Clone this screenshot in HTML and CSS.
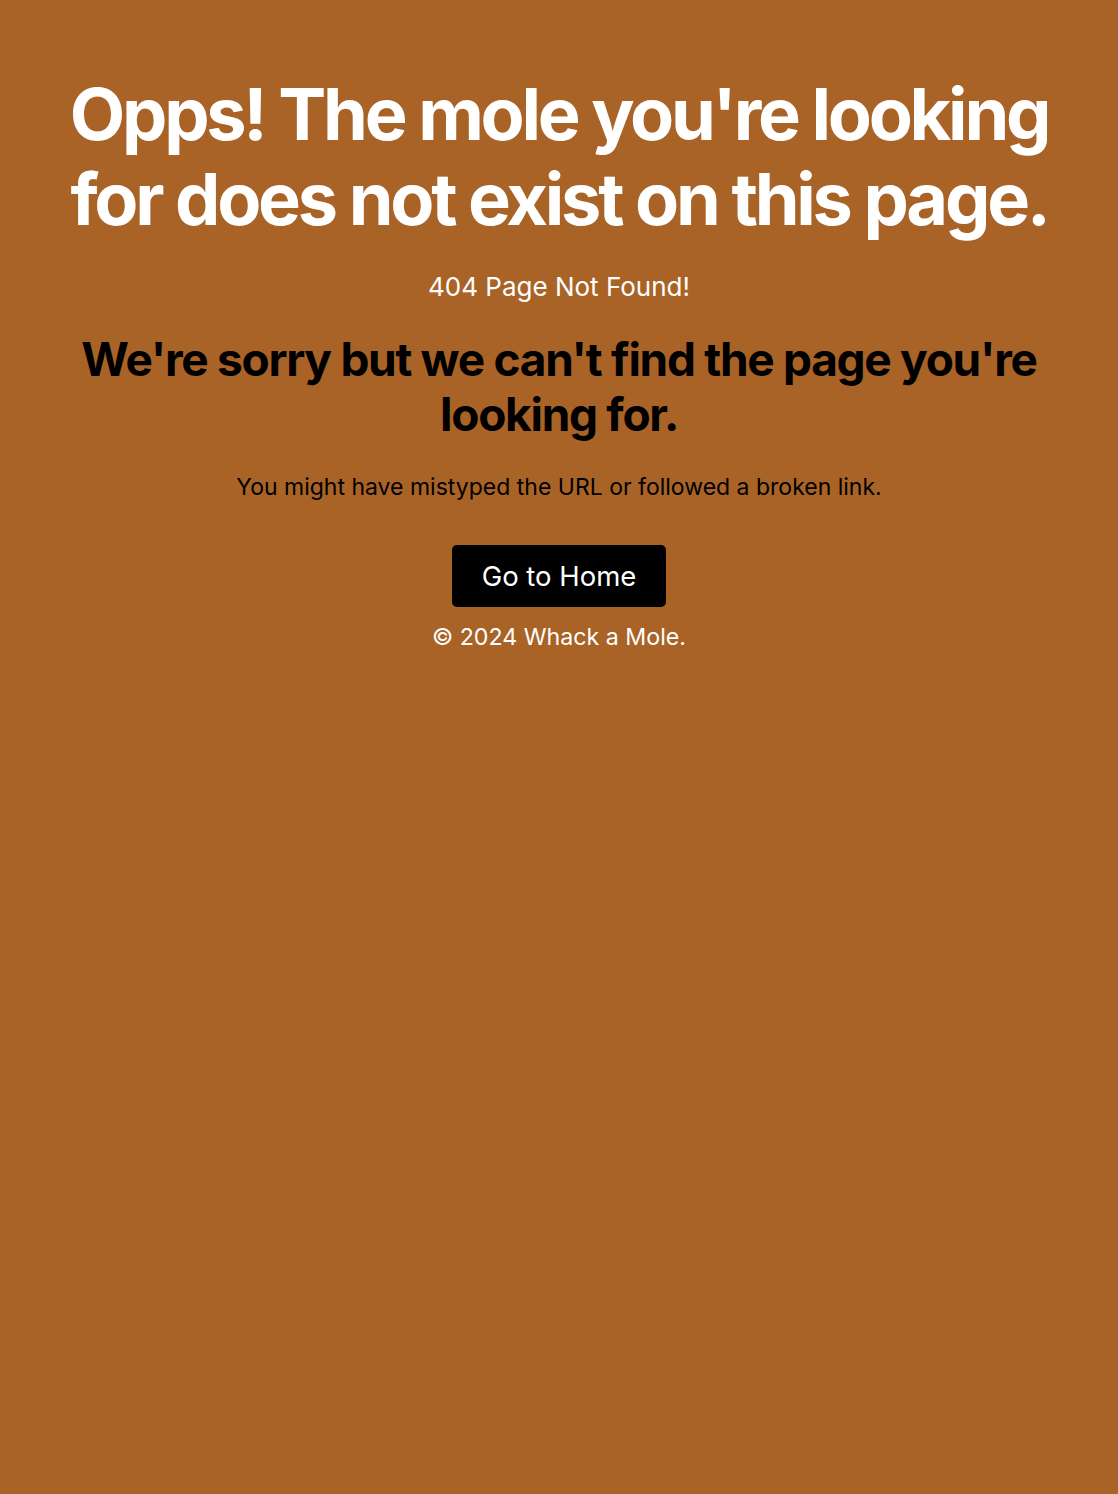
FILE: index.html
```html
<!DOCTYPE html>
<html lang="en">
<head>
<meta charset="utf-8">
<title>404 - Whack a Mole</title>
<link rel="stylesheet" href="styles.css">
</head>
<body>
<main class="page">
  <h1 class="title">Opps! The mole you're looking for does not exist on this page.</h1>
  <p class="code">404 Page Not Found!</p>
  <h2 class="sorry">We're sorry but we can't find the page you're looking for.</h2>
  <p class="hint">You might have mistyped the URL or followed a broken link.</p>
  <a class="home-btn" href="#">Go to Home</a>
  <footer class="foot">© 2024 Whack a Mole.</footer>
</main>
</body>
</html>
```

FILE: styles.css
```css
html, body {
  margin: 0;
  padding: 0;
  height: 100%;
}
body {
  background: #a96326;
  font-family: Inter, "Noto Sans", sans-serif;
}
.page {
  display: flex;
  flex-direction: column;
  align-items: center;
  text-align: center;
  padding: 71px 50px 0;
}
.title {
  margin: 0;
  color: #fff;
  font-size: 72px;
  font-weight: 700;
  line-height: 85px;
  letter-spacing: -0.045em;
}
.code {
  margin: 30px 0 0;
  color: #fff;
  font-size: 26px;
  line-height: 32px;
}
.sorry {
  margin: 29px 0 0;
  color: #000;
  font-size: 46px;
  font-weight: 700;
  line-height: 55px;
  letter-spacing: -0.028em;
}
.hint {
  margin: 29px 0 0;
  color: #000;
  font-size: 23px;
  line-height: 32px;
}
.home-btn {
  margin-top: 42px;
  display: inline-block;
  background: #000;
  color: #fff;
  text-decoration: none;
  font-size: 27.5px;
  line-height: 62px;
  padding: 0 30px;
  border-radius: 5px;
}
.foot {
  margin-top: 14px;
  color: #fff;
  font-size: 23.2px;
  line-height: 32px;
}
```
